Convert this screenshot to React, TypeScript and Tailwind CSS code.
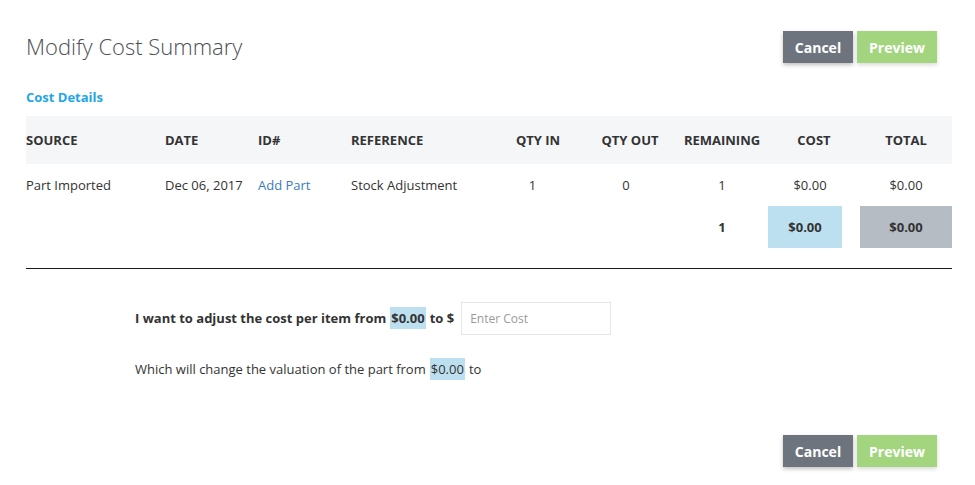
import React from 'react';

const cols = 'grid grid-cols-[139px_93px_93px_141px_92px_92px_92px_92px_92px]';

const ActionButtons: React.FC = () => (
  <div className="flex gap-1">
    <button className="h-8 w-[70px] bg-[#6e747e] text-[14px] font-bold text-white shadow-[0_2px_4px_rgba(0,0,0,0.25)]">
      Cancel
    </button>
    <button className="h-8 w-[80px] bg-[#a3d57f] text-[14px] font-bold text-white shadow-[0_2px_4px_rgba(0,0,0,0.15)]">
      Preview
    </button>
  </div>
);

const Money: React.FC<{ children: React.ReactNode }> = ({ children }) => (
  <span className="mx-[4px] bg-[#bde0f0] px-[1px] py-[2px]">{children}</span>
);

const App: React.FC = () => {
  return (
    <div className="min-h-[485px] bg-white pl-[26px] pr-[23px] text-[13px] text-[#333]" style={{ fontFamily: '"Open Sans", "Liberation Sans", sans-serif' }}>
      {/* Header */}
      <div className="flex items-center justify-between pr-[15px] pt-[31px]">
        <h1 className="-mt-[2px] text-[22px] font-light leading-8 text-[#4b4f56]">Modify Cost Summary</h1>
        <ActionButtons />
      </div>

      <h2 className="mt-[25px] text-[13px] font-bold leading-[18px] text-[#1fa6e8]">Cost Details</h2>

      {/* Cost table */}
      <div className="mt-[10px]">
        <div className={`${cols} h-[48px] items-center bg-[#f5f6f8] pt-[2px] font-bold`}>
          <div>SOURCE</div>
          <div>DATE</div>
          <div>ID#</div>
          <div>REFERENCE</div>
          <div className="text-center">QTY IN</div>
          <div className="text-center">QTY OUT</div>
          <div className="text-center">REMAINING</div>
          <div className="text-center">COST</div>
          <div className="text-center">TOTAL</div>
        </div>
        <div className={`${cols} h-[42px] items-center pt-[2px]`}>
          <div>Part Imported</div>
          <div>Dec 06, 2017</div>
          <div className="text-[#3b7bbd]">Add Part</div>
          <div>Stock Adjustment</div>
          <div className="pr-[11px] text-center">1</div>
          <div className="pr-[8px] text-center">0</div>
          <div className="text-center">1</div>
          <div className="pr-[8px] text-center">$0.00</div>
          <div className="text-center">$0.00</div>
        </div>
        <div className={`${cols} h-[42px] items-stretch font-bold`}>
          <div className="col-start-7 flex items-center justify-center pt-[1px]">1</div>
          <div className="flex">
            <div className="flex w-[74px] items-center justify-center bg-[#bde0f0] pt-[1px]">$0.00</div>
          </div>
          <div className="flex items-center justify-center bg-[#b6bcc4] pt-[1px]">$0.00</div>
        </div>
      </div>

      <div className="mt-[20px] h-px bg-[#1a1a1a]" />

      {/* Adjustment */}
      <div className="ml-[109px] mt-[33px]">
        <div className="flex items-center">
          <span className="font-bold">
            I want to adjust the cost per item from<Money>$0.00</Money>to $
          </span>
          <input
            className="ml-[7px] h-[33px] w-[150px] border border-[#e6e6e6] px-[8px] text-[12px] text-[#333] outline-none placeholder:text-[#9a9a9a]"
            placeholder="Enter Cost"
          />
        </div>
        <div className="mt-[25px] leading-[18px]">
          Which will change the valuation of the part from<Money>$0.00</Money>to
        </div>
      </div>

      {/* Footer */}
      <div className="mt-[57px] flex justify-end pr-[15px]">
        <ActionButtons />
      </div>
    </div>
  );
};

export default App;
